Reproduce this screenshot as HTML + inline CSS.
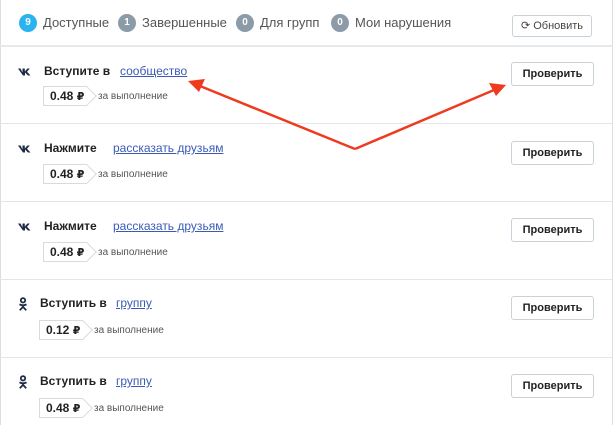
<!DOCTYPE html><html><head><meta charset="utf-8"><style>
body{margin:0;width:613px;height:425px;overflow:hidden;background:#fff;font-family:"Liberation Sans",sans-serif;position:relative}
.frame{position:absolute;left:0;top:0;width:611px;height:425px;border-left:1px solid #ddd;border-right:1px solid #ddd}
.hdr{position:absolute;top:0;left:0;right:0;height:45px;border-bottom:2px solid #e6e9ec}
.tab{position:absolute;top:14px;font-size:13px;color:#555;line-height:18px}
.b{display:inline-block;width:18px;height:18px;border-radius:50%;background:#8c9ba8;color:#fff;font-size:10px;font-weight:bold;text-align:center;line-height:18px;margin-right:6px;vertical-align:top}
.btn{position:absolute;border:1px solid #c9d1d9;border-radius:3px;background:#fff;font-size:11px;text-align:center;box-sizing:border-box}
.sep{position:absolute;left:0;right:0;height:1px;background:#e3e6e9}
.t{position:absolute;font-size:12px;font-weight:bold;color:#222}
.l{position:absolute;font-size:12px;color:#3a5bb5;text-decoration:underline}
.p{position:absolute;height:20px;width:44px;border:1px solid #d5dbe0;border-right:none;box-sizing:border-box;font-size:12px;font-weight:bold;line-height:18px;padding-left:6px;color:#222;white-space:nowrap}
.p:after{content:"";position:absolute;right:-7px;top:2px;width:13px;height:13px;border-top:1px solid #d5dbe0;border-right:1px solid #d5dbe0;transform:rotate(45deg);background:#fff;z-index:0}
.p span{position:relative;z-index:1}
.r{font-family:"DejaVu Sans",sans-serif;font-size:11px}
.s{position:absolute;font-size:10px;color:#555}
.ic{position:absolute}
</style></head><body>
<div class="frame"></div>
<div class="hdr">
<div class="tab" style="left:19px"><span class="b" style="background:#2ab4ef">9</span>Доступные</div>
<div class="tab" style="left:118px"><span class="b">1</span>Завершенные</div>
<div class="tab" style="left:236px"><span class="b">0</span>Для групп</div>
<div class="tab" style="left:331px"><span class="b">0</span>Мои нарушения</div>
<div class="btn" style="left:512px;top:15px;width:80px;height:22px;line-height:20px;color:#444">⟳ Обновить</div>
</div>
<div class="sep" style="top:123px"></div><div class="sep" style="top:201px"></div><div class="sep" style="top:279px"></div><div class="sep" style="top:357px"></div>

<svg width="0" height="0" style="position:absolute"><defs>
<symbol id="vk" viewBox="0 0 14 8"><path d="M0 0.5h2.5l2 4V0.5h2.3v3l2.6-3h2.4L9 3.8l3.5 3.7H10L7 4.5v3H5L0 .5z" fill="#1e2a44"/></symbol>
<symbol id="ok" viewBox="0 0 10 14"><circle cx="5" cy="3.3" r="2.2" fill="none" stroke="#1e2a44" stroke-width="1.8"/><path d="M1.5 7.3Q5 9.3 8.5 7.3M5 8.3v1.5M1.8 13.3L5 9.8l3.2 3.5" fill="none" stroke="#1e2a44" stroke-width="1.8"/></symbol>
</defs></svg>

<svg class="ic" style="left:18px;top:68px" width="14" height="8"><use href="#vk"/></svg><div class="t" style="left:44px;top:64px">Вступите в</div><div class="l" style="left:120px;top:64px">сообщество</div>
<div class="p" style="left:43px;top:86px"><span>0.48 <span class="r">₽</span></span></div><div class="s" style="left:98px;top:91px">за выполнение</div>
<div class="btn" style="left:511px;top:62px;width:83px;height:24px;line-height:22px;font-weight:bold;color:#222">Проверить</div>

<svg class="ic" style="left:18px;top:145px" width="14" height="8"><use href="#vk"/></svg><div class="t" style="left:44px;top:141px">Нажмите</div><div class="l" style="left:113px;top:141px">рассказать друзьям</div>
<div class="p" style="left:43px;top:164px"><span>0.48 <span class="r">₽</span></span></div><div class="s" style="left:98px;top:169px">за выполнение</div>
<div class="btn" style="left:511px;top:141px;width:83px;height:24px;line-height:22px;font-weight:bold;color:#222">Проверить</div>

<svg class="ic" style="left:18px;top:223px" width="14" height="8"><use href="#vk"/></svg><div class="t" style="left:44px;top:219px">Нажмите</div><div class="l" style="left:113px;top:219px">рассказать друзьям</div>
<div class="p" style="left:43px;top:242px"><span>0.48 <span class="r">₽</span></span></div><div class="s" style="left:98px;top:247px">за выполнение</div>
<div class="btn" style="left:511px;top:218px;width:83px;height:24px;line-height:22px;font-weight:bold;color:#222">Проверить</div>

<svg class="ic" style="left:18px;top:297px" width="10" height="14"><use href="#ok"/></svg><div class="t" style="left:40px;top:296px">Вступить в</div><div class="l" style="left:116px;top:296px">группу</div>
<div class="p" style="left:39px;top:320px"><span>0.12 <span class="r">₽</span></span></div><div class="s" style="left:94px;top:325px">за выполнение</div>
<div class="btn" style="left:511px;top:296px;width:83px;height:24px;line-height:22px;font-weight:bold;color:#222">Проверить</div>

<svg class="ic" style="left:18px;top:375px" width="10" height="14"><use href="#ok"/></svg><div class="t" style="left:40px;top:374px">Вступить в</div><div class="l" style="left:116px;top:374px">группу</div>
<div class="p" style="left:39px;top:398px"><span>0.48 <span class="r">₽</span></span></div><div class="s" style="left:94px;top:403px">за выполнение</div>
<div class="btn" style="left:511px;top:374px;width:83px;height:24px;line-height:22px;font-weight:bold;color:#222">Проверить</div>

<svg style="position:absolute;left:0;top:0" width="613" height="425">
<g stroke="#ee3b20" stroke-width="2.5" fill="none"><line x1="355" y1="149" x2="200" y2="86"/><line x1="355" y1="149" x2="494" y2="90"/></g>
<polygon points="188,81 205,79 199,92" fill="#ee3b20"/><polygon points="506,85 489,83 496,96" fill="#ee3b20"/>
</svg>
</body></html>
